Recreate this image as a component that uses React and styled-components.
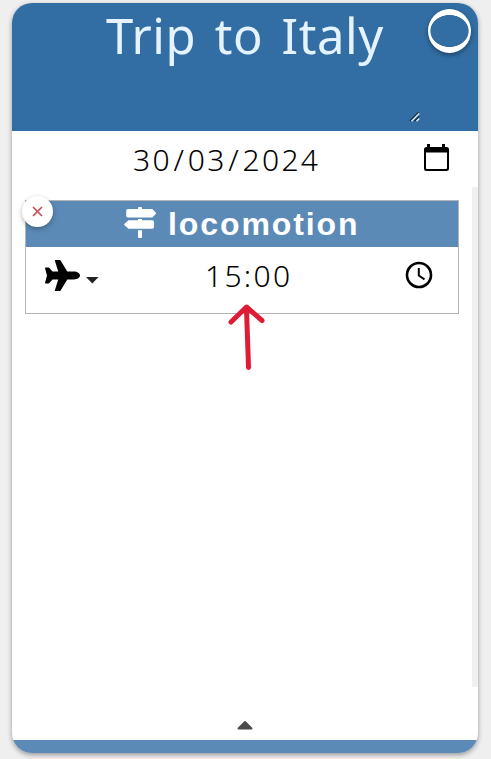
import React from "react";
import styled, { createGlobalStyle } from "styled-components";

const GlobalStyle = createGlobalStyle`
  *, *::before, *::after { box-sizing: border-box; }
  body {
    margin: 0;
    background: #efefef;
    font-family: "Noto Sans", "Open Sans", sans-serif;
    overflow: hidden;
  }
  svg { display: block; flex: none; }
`;

const Page = styled.main`
  height: 759px;
  padding: 3px 13px 6px 12px;
`;

const Card = styled.article`
  display: flex;
  flex-direction: column;
  height: 750px;
  border-radius: 20px;
  background: #fff;
  box-shadow: 0 2px 5px rgba(0, 0, 0, 0.36);
`;

const Header = styled.header`
  position: relative;
  flex: none;
  height: 128px;
  padding: 0 56px;
  border-radius: 20px 20px 0 0;
  background: #326ea4;
`;

const Title = styled.h1`
  margin: 0;
  color: #e5f2ff;
  font-size: 49px;
  font-weight: 400;
  line-height: 65px;
  letter-spacing: 0.6px;
  word-spacing: 5px;
  text-align: center;
  white-space: nowrap;
`;

const Grip = styled.svg`
  position: absolute;
  right: 58px;
  bottom: 9px;
`;

const RingButton = styled.button`
  position: absolute;
  top: 6px;
  right: 7px;
  width: 43px;
  height: 44px;
  padding: 0;
  border: 0;
  border-radius: 50%;
  background: radial-gradient(ellipse 19.5px 16.3px at 50% 50%, #326ea4 96%, #fff 100%);
  box-shadow: 0 2px 5px rgba(0, 0, 0, 0.4);
`;

const DateRow = styled.div`
  display: flex;
  align-items: center;
  flex: none;
  height: 56px;
  padding-right: 29px;
`;

const Value = styled.span`
  flex: 1;
  padding: 2px 0 0 ${(p) => p.$inset}px;
  color: #000;
  font-size: 30px;
  font-weight: 300;
  line-height: 40px;
  letter-spacing: 2.3px;
  white-space: nowrap;
`;

const Separator = styled.span`
  margin: 0 1.6px;
`;

const CalendarIcon = styled.svg`
  margin-bottom: 2px;
`;

const Stops = styled.section`
  flex: none;
  height: 500px;
  padding: 13px 13px 0;
  border-right: 6px solid #f0f0f0;
`;

const Stop = styled.section`
  position: relative;
  height: 114px;
  border: 1px solid #b3b5b7;
`;

const StopHeading = styled.h2`
  display: flex;
  align-items: center;
  height: 46px;
  margin: 0;
  padding-left: 98px;
  gap: 12px;
  background: #5b8ab6;
  color: #fff;
  font: bold 32px/46px "Liberation Sans", Arial, sans-serif;
  letter-spacing: 1.9px;
`;

const SignsIcon = styled.svg`
  margin-bottom: 3px;
`;

const CloseButton = styled.button`
  position: absolute;
  top: -5px;
  left: -4px;
  display: grid;
  place-items: center;
  width: 31px;
  height: 31px;
  padding: 0;
  border: 0;
  border-radius: 50%;
  background: #fff;
  box-shadow: 0 2px 5px rgba(0, 0, 0, 0.3);
`;

const TimeRow = styled.div`
  display: flex;
  align-items: center;
  height: 56px;
  padding: 0 25px 0 19px;
`;

const Transport = styled.div`
  display: flex;
  align-items: center;
  gap: 6px;
`;

const Caret = styled.svg`
  margin-top: 10px;
`;

const Footer = styled.footer`
  display: flex;
  flex-direction: column;
  align-items: center;
  justify-content: space-between;
  flex: 1;
  padding-top: 33px;
  border-radius: 0 0 20px 20px;
  overflow: hidden;
`;

const FooterBar = styled.div`
  width: 100%;
  height: 13px;
  background: #5b8ab6;
`;

const Pointer = styled.svg`
  position: absolute;
  top: 101px;
  left: 200px;
`;

export default function App() {
  return (
    <Page>
      <GlobalStyle />
      <Card>
        <Header>
          <Title>Trip to Italy</Title>
          <Grip width="11" height="11" viewBox="0 0 11 11" fill="none" strokeWidth="1.6">
            <path d="M1 10L9.5 1.500M5.500 10L10 5.500" stroke="#142c43" />
            <path d="M2.500 10.200L10.200 2.500M7.500 10.200l2.700-2.700" stroke="#d7e4ef" />
          </Grip>
          <RingButton aria-label="Select trip" />
        </Header>
        <DateRow>
          <Value $inset={121}>
            30<Separator>/</Separator>03<Separator>/</Separator>2024
          </Value>
          <CalendarIcon width="26" height="28" viewBox="0 0 26 28">
            <path fillRule="evenodd" d="M4 0h3v3h12V0h3v3h1.500A2.500 2.500 0 0 1 26 5.500V24.500a2.500 2.500 0 0 1-2.500 2.500h-20A2.500 2.500 0 0 1 1 24.500v-19A2.500 2.500 0 0 1 3.500 3H4zM3 8.500V24a1 1 0 0 0 1 1h19a1 1 0 0 0 1-1V8.500z" />
          </CalendarIcon>
        </DateRow>
        <Stops>
          <Stop>
            <StopHeading>
              <SignsIcon width="32" height="32" viewBox="0 0 32 32" fill="currentColor">
                <path d="M14 2V1a1 1 0 0 1 1-1h2a1 1 0 0 1 1 1v1h10.200l3.300 3.200a1.500 1.500 0 0 1 0 2.100L28.200 10.500H4A1.800 1.800 0 0 1 2.200 8.700V3.800A1.800 1.800 0 0 1 4 2z" />
                <path d="M14 13.300v-1.300h4v1.300h10.200A1.800 1.800 0 0 1 30 15.100v4.800a1.800 1.800 0 0 1-1.800 1.800H4.500L.8 18.600a1.500 1.500 0 0 1 0-2.200l3.700-3.100z" />
                <path d="M14 23.300h4v6.700a1 1 0 0 1-1 1h-2a1 1 0 0 1-1-1z" />
              </SignsIcon>
              locomotion
            </StopHeading>
            <CloseButton aria-label="Remove stop">
              <svg width="11" height="11" viewBox="0 0 11 11" fill="none" stroke="#c55353" strokeWidth="1.700">
                <path d="M1 1l9 9M10 1l-9 9" />
              </svg>
            </CloseButton>
            <TimeRow>
              <Transport>
                <svg width="35" height="31" viewBox="0 0 35 31">
                  <path d="M10.500 0h4.200a1 1 0 0 1 .9.500L22.300 11.600H29c3.400 0 6 2 6 3.900s-2.600 3.900-6 3.900h-6.700L15.600 30.500a1 1 0 0 1-.9.500h-4.200a.6.6 0 0 1-.6-.8l3.300-10.800H7.500L4.400 23a1 1 0 0 1-.8.400H.7a.6.6 0 0 1-.6-.8L2 15.500.1 8.400a.6.6 0 0 1 .6-.8h2.900a1 1 0 0 1 .8.400l3.100 3.600h5.700L9.900.8a.6.6 0 0 1 .6-.8z" />
                </svg>
                <Caret width="13" height="7" viewBox="0 0 13 7" fill="#242424">
                  <path d="M0 0h12.600L6.300 6.500z" />
                </Caret>
              </Transport>
              <Value $inset={106}>15:00</Value>
              <svg width="28" height="28" viewBox="0 0 28 28" fill="none" stroke="#000">
                <circle cx="14" cy="14" r="12" strokeWidth="2.600" />
                <path d="M13.800 7v7.500l5.700 3.800" strokeWidth="2" />
              </svg>
            </TimeRow>
            <Pointer width="40" height="71" viewBox="0 0 40 71" fill="none" stroke="#df1c35" strokeWidth="5" strokeLinecap="round" strokeLinejoin="round">
              <path d="M22.500 65.500C22 47 21 26 20.500 5M5 20L20.500 5L36 18.500" />
            </Pointer>
          </Stop>
        </Stops>
        <Footer>
          <svg width="16" height="10" viewBox="0 0 16 10" fill="#4b4b4b" stroke="#4b4b4b" strokeWidth="2" strokeLinejoin="round">
            <path d="M1.500 8.500L8 2l6.500 6.500z" />
          </svg>
          <FooterBar />
        </Footer>
      </Card>
    </Page>
  );
}
